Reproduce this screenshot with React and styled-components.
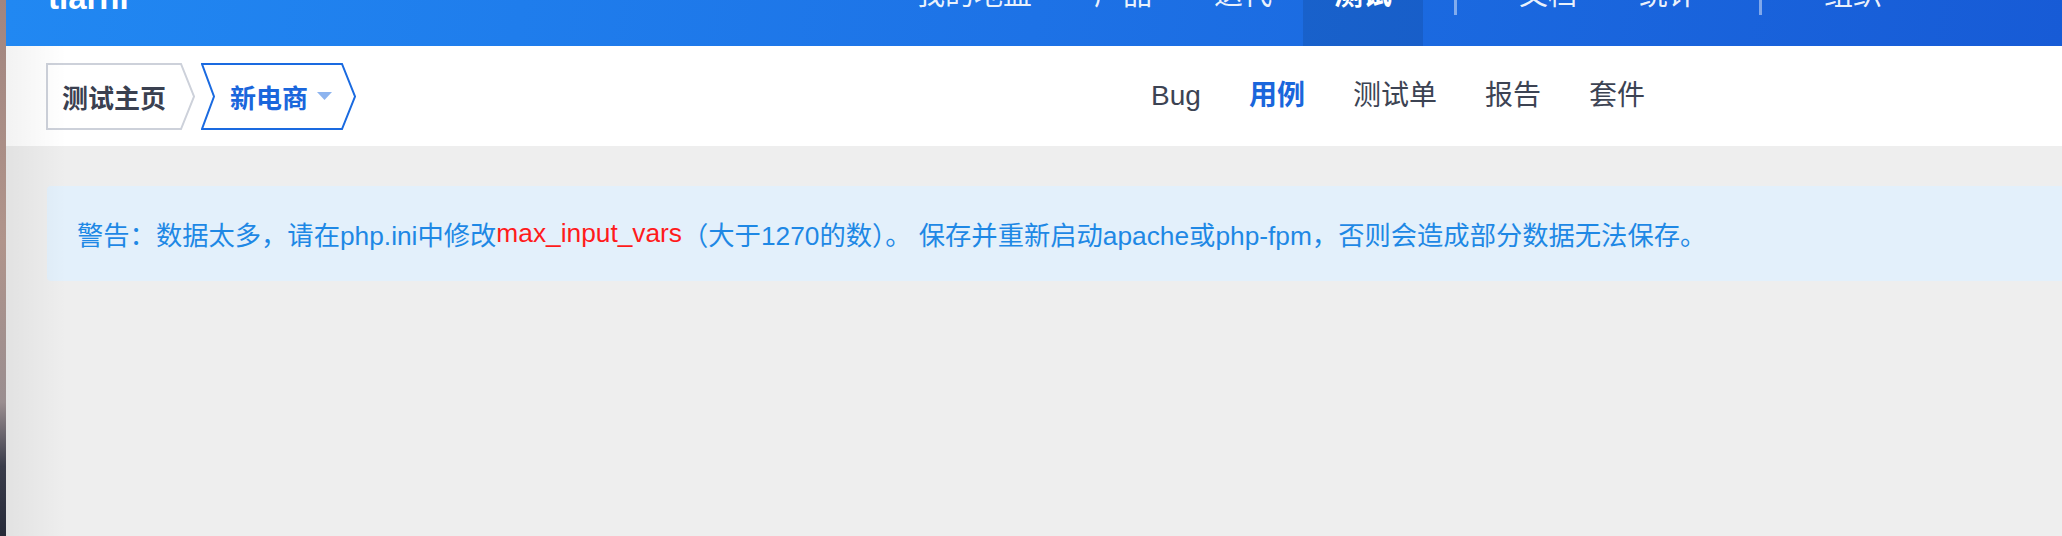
import styled, { createGlobalStyle } from 'styled-components'

const mainNav = [
  { label: '我的地盘' },
  { label: '产品' },
  { label: '迭代' },
  { label: '测试', active: true },
  { divider: true },
  { label: '文档' },
  { label: '统计' },
  { divider: true },
  { label: '组织' },
]

const subNav = [
  { label: 'Bug' },
  { label: '用例', active: true },
  { label: '测试单' },
  { label: '报告' },
  { label: '套件' },
]

// chevron outline behind a breadcrumb label
const CrumbOutline = ({ w, notch, color }) => {
  const d = notch
    ? `M1 1H${w - 14}L${w - 1} 33.5L${w - 14} 66H1L13 33.5Z`
    : `M1 1H${w - 14}L${w - 1} 33.5L${w - 14} 66H1Z`
  return (
    <Outline width={w} height={67} viewBox={`0 0 ${w} 67`}>
      <path d={d} fill="#fff" stroke={color} strokeWidth="2" strokeLinejoin="miter" />
    </Outline>
  )
}

const App = () => {
  return (
    <>
      <GlobalStyle />
      <Page>
        <Wallpaper />
        <Window>
          <Header>
            <HeaderRow>
              <Logo>tiarni</Logo>
              <MainNav>
                {mainNav.map((item, i) =>
                  item.divider
                    ? <NavDivider key={i} />
                    : <NavItem key={i} $active={item.active}>{item.label}</NavItem>
                )}
              </MainNav>
            </HeaderRow>
          </Header>
          <SubHeader>
            <Crumbs>
              <Crumb $w={149} $pad="16px">
                <CrumbOutline w={149} color="#cdd1da" />
                <CrumbLabel $color="#3a4050">测试主页</CrumbLabel>
              </Crumb>
              <Crumb $w={155} $pad="29px">
                <CrumbOutline w={155} notch color="#1a6ae0" />
                <CrumbLabel $color="#1a66dc">
                  新电商
                  <svg width="15" height="8" viewBox="0 0 15 8">
                    <path d="M0 0H15L7.5 8Z" fill="#8db4ef" />
                  </svg>
                </CrumbLabel>
              </Crumb>
            </Crumbs>
            <SubNav>
              {subNav.map((item) => (
                <SubNavItem key={item.label} $active={item.active}>{item.label}</SubNavItem>
              ))}
            </SubNav>
          </SubHeader>
          <Main>
            <Alert>
              警告：数据太多，请在php.ini中修改<Red>max_input_vars</Red>（大于1270的数）。 保存并重新启动apache或php-fpm，否则会造成部分数据无法保存。
            </Alert>
          </Main>
        </Window>
      </Page>
    </>
  )
}

export default App

const GlobalStyle = createGlobalStyle`
  html, body {
    margin: 0;
    padding: 0;
    background: #eeeeee;
    overflow: hidden;
  }
  body {
    font-family: "Liberation Sans", "Noto Sans CJK SC", sans-serif;
  }
`
const Page = styled.div`
  display: flex;
  height: 100vh;
`
const Wallpaper = styled.div`
  flex: none;
  width: 6px;
  background: linear-gradient(#a1857f 0%, #b0948b 45%, #9a8e90 75%, #3a3c4a 87%, #262a38 100%);
`
const Window = styled.div`
  flex: 1;
  min-width: 0;
  display: flex;
  flex-direction: column;
  position: relative;
  background: #eeeeee;
  &::after {
    content: '';
    position: absolute;
    left: 0;
    top: 46px;
    bottom: 0;
    width: 60px;
    background: linear-gradient(to right, rgba(0, 0, 0, 0.05), rgba(0, 0, 0, 0));
    pointer-events: none;
  }
`
const Header = styled.div`
  flex: none;
  height: 46px;
  overflow: hidden;
  background: linear-gradient(100deg, #2188f2 0%, #1d72e6 50%, #175bd6 100%);
`
const HeaderRow = styled.div`
  display: flex;
  align-items: flex-start;
  height: 65px;
  margin-top: -19px;
  padding: 0 149px 0 42px;
`
const Logo = styled.div`
  font-size: 33px;
  line-height: 33px;
  font-weight: 700;
  color: #ffffff;
`
const MainNav = styled.nav`
  margin-left: auto;
  display: flex;
  align-items: flex-start;
  height: 100%;
`
const NavItem = styled.div`
  height: 65px;
  padding: 0 31px;
  font-size: 29px;
  line-height: 29px;
  color: ${(p) => (p.$active ? '#ffffff' : 'rgba(255, 255, 255, 0.92)')};
  font-weight: ${(p) => (p.$active ? 700 : 400)};
  background: ${(p) => (p.$active ? 'rgba(0, 0, 0, 0.1)' : 'transparent')};
`
const NavDivider = styled.div`
  width: 3px;
  height: 34px;
  margin: 0 31px;
  background: rgba(255, 255, 255, 0.45);
`
const SubHeader = styled.div`
  flex: none;
  height: 100px;
  display: flex;
  align-items: center;
  padding: 0 417px 0 40px;
  background: #ffffff;
`
const Crumbs = styled.div`
  display: flex;
  gap: 6px;
`
const Crumb = styled.div`
  position: relative;
  width: ${(p) => p.$w}px;
  height: 67px;
  box-sizing: border-box;
  padding-left: ${(p) => p.$pad};
  display: flex;
  align-items: center;
`
const Outline = styled.svg`
  position: absolute;
  left: 0;
  top: 0;
`
const CrumbLabel = styled.span`
  position: relative;
  display: flex;
  align-items: center;
  gap: 9px;
  font-size: 26px;
  font-weight: 700;
  color: ${(p) => p.$color};
`
const SubNav = styled.nav`
  margin-left: auto;
  display: flex;
  align-items: baseline;
  gap: 48px;
`
const SubNavItem = styled.div`
  font-size: 28px;
  line-height: 40px;
  color: ${(p) => (p.$active ? '#1a66dc' : '#3c4353')};
  font-weight: ${(p) => (p.$active ? 700 : 400)};
`
const Main = styled.div`
  flex: 1;
  padding: 40px 0 0 41px;
`
const Alert = styled.div`
  height: 95px;
  display: flex;
  align-items: center;
  padding-left: 30px;
  border-radius: 4px 0 0 4px;
  background: #e3f0fb;
  color: #1e88e5;
  font-size: 26.3px;
  white-space: nowrap;
`
const Red = styled.span`
  color: #ff1b1b;
`
